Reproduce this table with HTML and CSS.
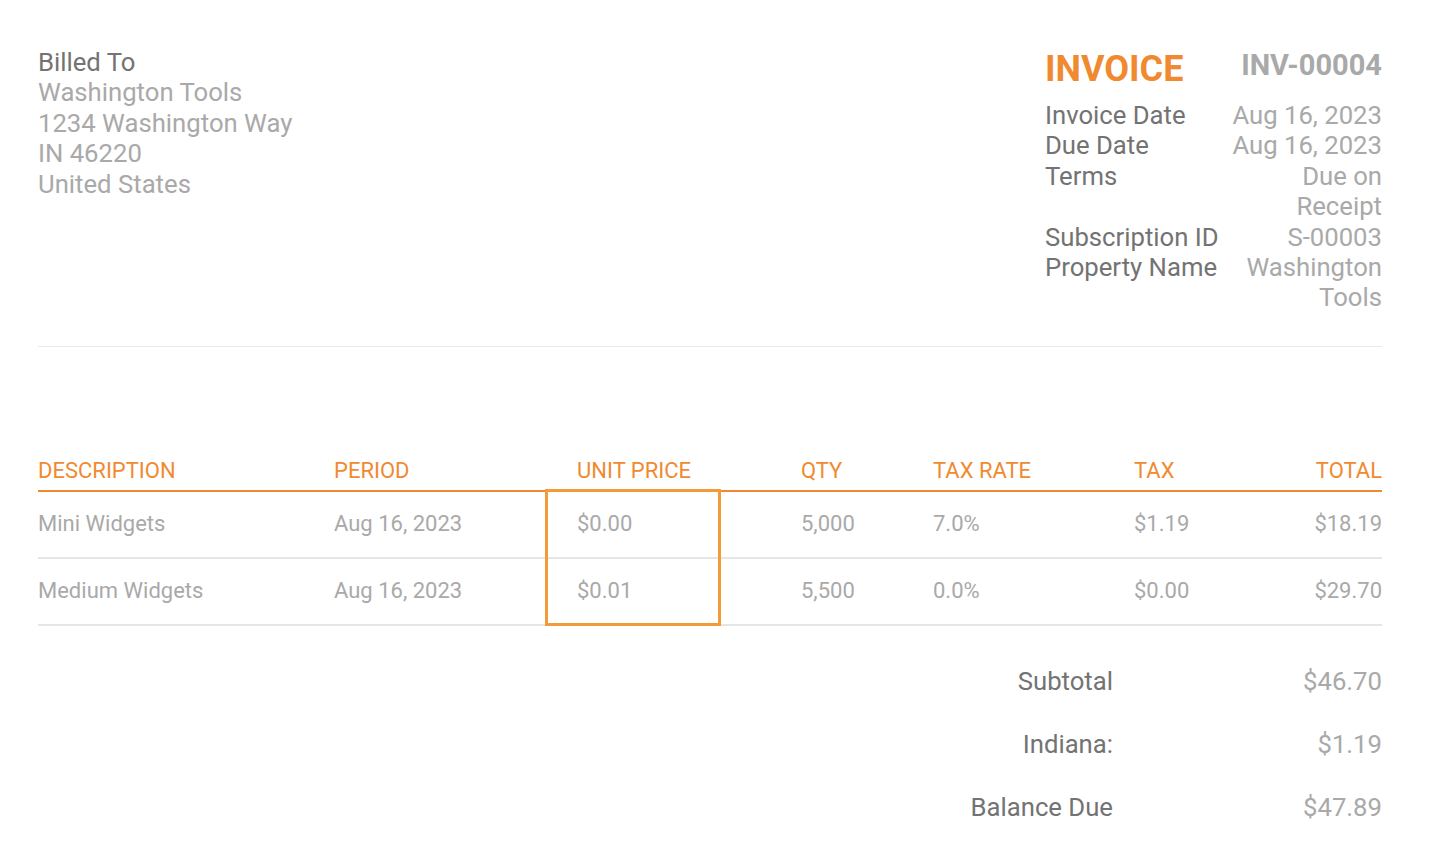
FILE: index.html
```html
<!DOCTYPE html>
<html lang="en">
<head>
    <meta charset="UTF-8">
    <title>Invoice INV-00004</title>
    <link rel="stylesheet" href="styles.css">
</head>
<body>
    <div class="invoice">
        <div class="top">
            <div class="billed">
                <div class="label">Billed To</div>
                <div>Washington Tools</div>
                <div>1234 Washington Way</div>
                <div>IN 46220</div>
                <div>United States</div>
            </div>
            <div class="meta">
                <div class="title">INVOICE</div>
                <div class="number">INV-00004</div>
                <div class="label">Invoice Date</div>
                <div class="value">Aug 16, 2023</div>
                <div class="label">Due Date</div>
                <div class="value">Aug 16, 2023</div>
                <div class="label">Terms</div>
                <div class="value">Due on Receipt</div>
                <div class="label">Subscription ID</div>
                <div class="value">S-00003</div>
                <div class="label">Property Name</div>
                <div class="value">Washington Tools</div>
            </div>
        </div>

        <hr class="divider">

        <div class="items">
            <div class="row head">
                <div>DESCRIPTION</div>
                <div>PERIOD</div>
                <div>UNIT PRICE</div>
                <div>QTY</div>
                <div>TAX RATE</div>
                <div>TAX</div>
                <div class="right">TOTAL</div>
            </div>
            <div class="row">
                <div>Mini Widgets</div>
                <div>Aug 16, 2023</div>
                <div>$0.00</div>
                <div>5,000</div>
                <div>7.0%</div>
                <div>$1.19</div>
                <div class="right">$18.19</div>
            </div>
            <div class="row">
                <div>Medium Widgets</div>
                <div>Aug 16, 2023</div>
                <div>$0.01</div>
                <div>5,500</div>
                <div>0.0%</div>
                <div>$0.00</div>
                <div class="right">$29.70</div>
            </div>
            <div class="highlight"></div>
        </div>

        <div class="totals">
            <div class="label">Subtotal</div>
            <div class="value">$46.70</div>
            <div class="label">Indiana:</div>
            <div class="value">$1.19</div>
            <div class="label">Balance Due</div>
            <div class="value">$47.89</div>
        </div>
    </div>
</body>
</html>
```

FILE: styles.css
```css
body {
    margin: 0;
    background: #ffffff;
    font-family: Roboto, "Liberation Sans", Arial, sans-serif;
    color: #a9a9a9;
}
.invoice {
    padding: 47px 50px 0 38px;
    font-size: 25.7px;
    line-height: 30.4px;
}
.label {
    color: #737373;
}
.top {
    display: flex;
    justify-content: space-between;
}
.meta {
    display: grid;
    grid-template-columns: 186px 151px;
    align-content: start;
}
.meta .title {
    color: #f08a30;
    font-weight: bold;
    font-size: 36px;
    line-height: 40px;
    padding-top: 2px;
    margin-bottom: 11px;
}
.meta .number {
    color: #a9a9a9;
    font-weight: bold;
    font-size: 29px;
    line-height: 36px;
    text-align: right;
}
.meta .value {
    text-align: right;
}
.divider {
    border: none;
    border-top: 1px solid #e8e8e8;
    margin: 33px 0 0 0;
}
.items {
    position: relative;
    margin-top: 109px;
    font-size: 22px;
}
.row {
    display: grid;
    grid-template-columns: 296px 243px 224px 132px 201px 1fr 120px;
    align-items: center;
    height: 65px;
    border-bottom: 2px solid #e6e6e6;
}
.row.head {
    color: #f08a30;
    height: 34px;
    align-items: start;
    border-bottom: 2px solid #f08a30;
}
.right {
    text-align: right;
}
.highlight {
    position: absolute;
    left: 507px;
    top: 33px;
    width: 170px;
    height: 131px;
    border: 3px solid #f39a3a;
}
.totals {
    display: grid;
    grid-template-columns: 1fr 269px;
    margin-top: 40px;
    row-gap: 32.5px;
}
.totals .label {
    text-align: right;
}
.totals .value {
    text-align: right;
}
```
